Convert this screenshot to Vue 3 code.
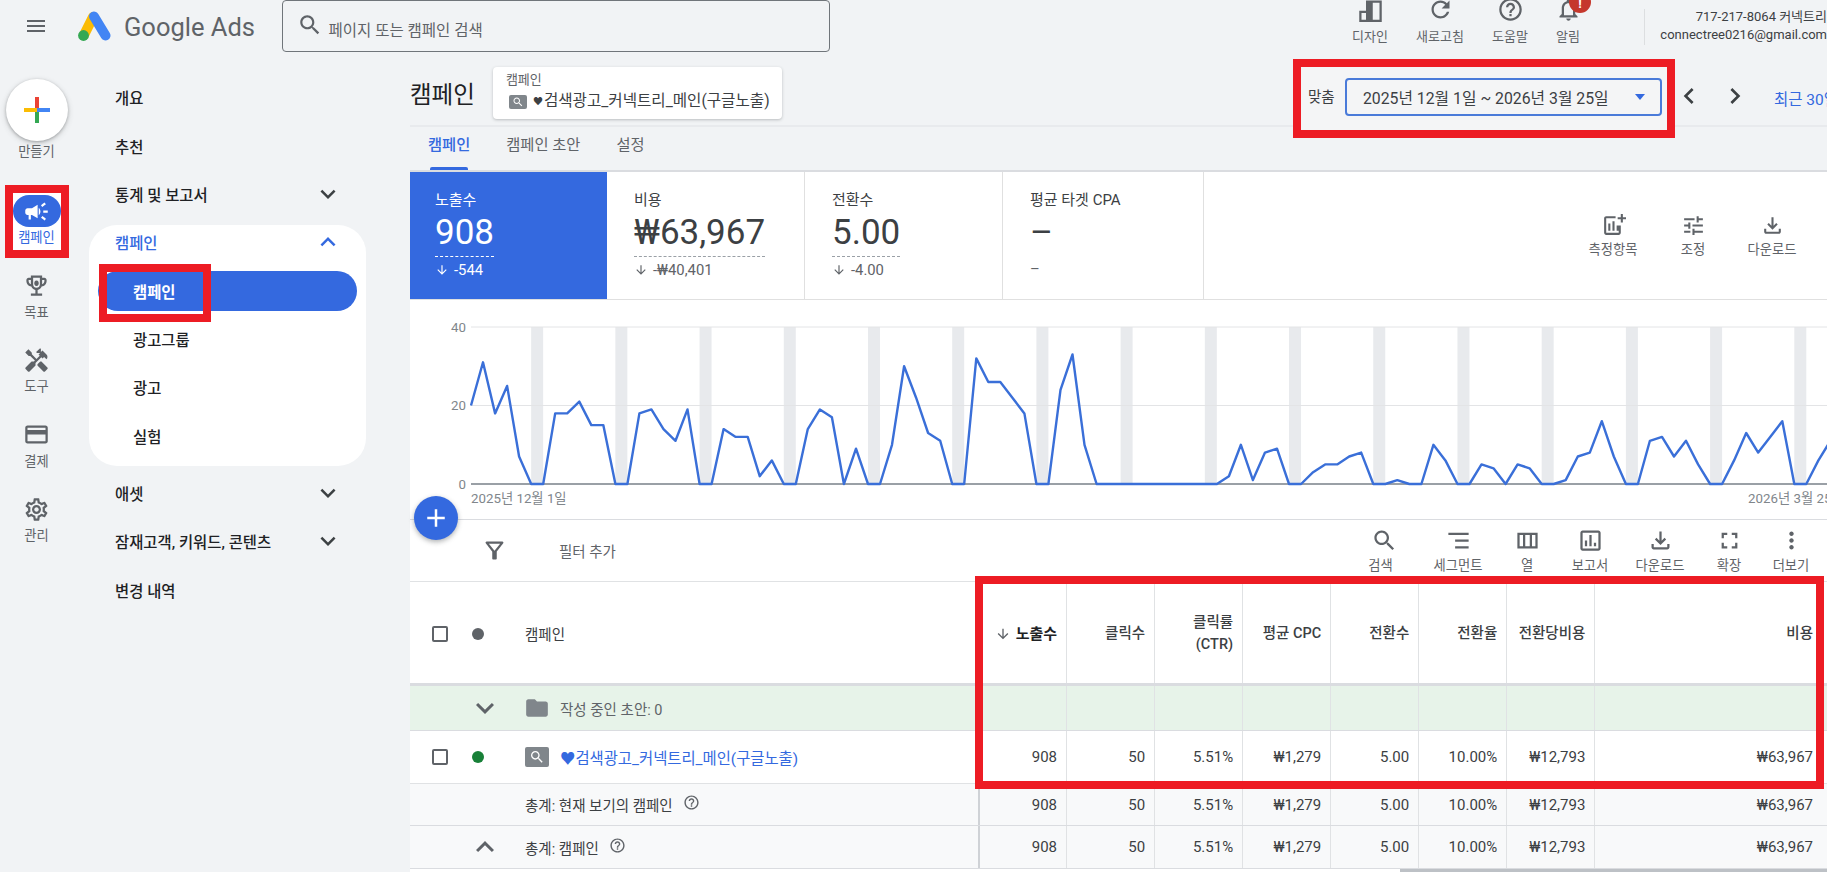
<script setup>
const icons = {
  menu: 'M3 18h18v-2H3v2zm0-5h18v-2H3v2zm0-7v2h18V6H3z',
  search: 'M15.5 14h-.79l-.28-.27C15.41 12.59 16 11.11 16 9.5 16 5.91 13.09 3 9.5 3S3 5.91 3 9.5 5.91 16 9.5 16c1.61 0 3.09-.59 4.23-1.57l.27.28v.79l5 4.99L20.49 19l-4.99-5zm-6 0C7.01 14 5 11.99 5 9.5S7.01 5 9.5 5 14 7.01 14 9.5 11.99 14 9.5 14z',
  more: 'M16.59 8.59L12 13.17 7.41 8.59 6 10l6 6 6-6z',
  less: 'M12 8l-6 6 1.41 1.41L12 10.83l4.59 4.58L18 14z',
  left: 'M15.41 7.41L14 6l-6 6 6 6 1.41-1.41L10.83 12z',
  right: 'M10 6L8.59 7.41 13.17 12l-4.58 4.59L10 18l6-6z',
  refresh: 'M17.65 6.35C16.2 4.9 14.21 4 12 4c-4.42 0-7.99 3.58-7.99 8s3.57 8 7.99 8c3.73 0 6.84-2.55 7.73-6h-2.08c-.82 2.33-3.04 4-5.65 4-3.31 0-6-2.69-6-6s2.69-6 6-6c1.66 0 3.14.69 4.22 1.78L13 11h7V4l-2.35 2.35z',
  help: 'M11 18h2v-2h-2v2zm1-16C6.48 2 2 6.48 2 12s4.48 10 10 10 10-4.48 10-10S17.52 2 12 2zm0 18c-4.41 0-8-3.59-8-8s3.59-8 8-8 8 3.59 8 8-3.59 8-8 8zm0-14c-2.21 0-4 1.79-4 4h2c0-1.1.9-2 2-2s2 .9 2 2c0 2-3 1.75-3 5h2c0-2.25 3-2.5 3-5 0-2.21-1.79-4-4-4z',
  bell: 'M12 22c1.1 0 2-.9 2-2h-4c0 1.1.9 2 2 2zm6-6v-5c0-3.07-1.63-5.64-4.5-6.32V4c0-.83-.67-1.5-1.5-1.5s-1.5.67-1.5 1.5v.68C7.64 5.36 6 7.92 6 11v5l-2 2v1h16v-1l-2-2zm-2 1H8v-6c0-2.48 1.51-4.5 4-4.5s4 2.02 4 4.5v6z',
  design: 'M2 13h6V4h14v19H2V13zm2 2v6h4v-6H4zm10-9v15h6V6h-6z',
  download: 'M18 15v3H6v-3H4v3c0 1.1.9 2 2 2h12c1.1 0 2-.9 2-2v-3h-2zm-1-4l-1.41-1.41L13 12.17V4h-2v8.17L8.41 9.59 7 11l5 5 5-5z',
  tune: 'M3 17v2h6v-2H3zM3 5v2h10V5H3zm10 16v-2h8v-2h-8v-2h-2v6h2zM7 9v2H3v2h4v2h2V9H7zm14 4v-2H11v2h10zm-6-4h2V7h4V5h-4V3h-2v6z',
  metric: 'M14 3H5c-1.1 0-2 .9-2 2v14c0 1.1.9 2 2 2h12c1.1 0 2-.9 2-2v-7h-2v7H5V5h9V3zM7 10h2v7H7zm4-2h2v9h-2zm4 4h2v5h-2zM19 1h2v3h3v2h-3v3h-2V6h-3V4h3z',
  filter: 'M7 6h10l-5.01 6.3L7 6zm-2.75-.39C6.27 8.2 10 13 10 13v6c0 .55.45 1 1 1h2c.55 0 1-.45 1-1v-6s3.73-4.8 5.75-7.39C20.26 4.95 19.79 4 18.96 4H5.04c-.83 0-1.3.95-.79 1.61z',
  segment: 'M3 5h18v2H3zM9 11h12v2H9zM9 17h12v2H9z',
  columns: 'M3 5v14h18V5H3zm11 2v10h-4V7h4zM5 7h3v10H5V7zm14 10h-3V7h3v10z',
  report: 'M19 3H5c-1.1 0-2 .9-2 2v14c0 1.1.9 2 2 2h14c1.1 0 2-.9 2-2V5c0-1.1-.9-2-2-2zm0 16H5V5h14v14zM7 12h2v5H7zm4-5h2v10h-2zm4 7h2v3h-2z',
  expand: 'M7 14H5v5h5v-2H7v-3zm-2-4h2V7h3V5H5v5zm12 7h-3v2h5v-5h-2v3zM14 5v2h3v3h2V5h-5z',
  dots: 'M12 8c1.1 0 2-.9 2-2s-.9-2-2-2-2 .9-2 2 .9 2 2 2zm0 2c-1.1 0-2 .9-2 2s.9 2 2 2 2-.9 2-2-.9-2-2-2zm0 6c-1.1 0-2 .9-2 2s.9 2 2 2 2-.9 2-2-.9-2-2-2z',
  campaign: 'M18 11v2h4v-2h-4zm-2 6.61c.96.71 2.21 1.65 3.2 2.39.4-.53.8-1.07 1.2-1.6-.99-.74-2.24-1.68-3.2-2.4-.4.54-.8 1.08-1.2 1.61zM20.4 5.6c-.4-.53-.8-1.07-1.2-1.6-.99.74-2.24 1.68-3.2 2.4.4.53.8 1.07 1.2 1.6.96-.72 2.21-1.65 3.2-2.4zM4 9c-1.1 0-2 .9-2 2v2c0 1.1.9 2 2 2h1v4h2v-4h1l5 3V6L8 9H4zm11.5 3c0-1.33-.58-2.53-1.5-3.35v6.69c.92-.81 1.5-2.01 1.5-3.34z',
  trophy: 'M19 5h-2V3H7v2H5c-1.1 0-2 .9-2 2v1c0 2.55 1.92 4.63 4.39 4.94.63 1.5 1.98 2.63 3.61 2.96V19H7v2h10v-2h-4v-3.1c1.63-.33 2.98-1.46 3.61-2.96C19.08 12.63 21 10.55 21 8V7c0-1.1-.9-2-2-2zM5 8V7h2v3.82C5.84 10.4 5 9.3 5 8zm7 6c-1.65 0-3-1.35-3-3V5h6v6c0 1.65-1.35 3-3 3zm7-6c0 1.3-.84 2.4-2 2.82V7h2v1zM12 7.5a2 2.5 0 1 0 .01 0z',
  tools: 'M21.67 18.17l-5.3-5.3h-.99l-2.54 2.54v.99l5.3 5.3c.39.39 1.02.39 1.41 0l2.12-2.12c.39-.38.39-1.02 0-1.41zM17.34 10.19l1.41-1.41 2.12 2.12c1.17-1.17 1.17-3.07 0-4.24l-3.54-3.54-1.41 1.41V1.71l-.7-.71-3.54 3.54.71.71h2.83l-1.41 1.41 1.06 1.06-2.89 2.89-4.13-4.13V5.06L4.83 2.04 2 4.87 5.03 7.9h1.41l4.13 4.13-.85.85H7.6l-5.3 5.3c-.39.39-.39 1.02 0 1.41l2.12 2.12c.39.39 1.02.39 1.41 0l5.3-5.3v-2.12l5.15-5.15 1.06 1.05z',
  card: 'M20 4H4c-1.11 0-1.99.89-1.99 2L2 18c0 1.11.89 2 2 2h16c1.11 0 2-.89 2-2V6c0-1.11-.89-2-2-2zm0 14H4v-6h16v6zm0-10H4V6h16v2z',
  gear: 'M19.43 12.98c.04-.32.07-.64.07-.98s-.03-.66-.07-.98l2.11-1.65c.19-.15.24-.42.12-.64l-2-3.46c-.12-.22-.39-.3-.61-.22l-2.49 1c-.52-.4-1.08-.73-1.69-.98l-.38-2.65C14.46 2.18 14.25 2 14 2h-4c-.25 0-.46.18-.49.42l-.38 2.65c-.61.25-1.17.59-1.69.98l-2.49-1c-.23-.09-.49 0-.61.22l-2 3.46c-.13.22-.07.49.12.64l2.11 1.65c-.04.32-.07.65-.07.98s.03.66.07.98l-2.11 1.65c-.19.15-.24.42-.12.64l2 3.46c.12.22.39.3.61.22l2.49-1c.52.4 1.08.73 1.69.98l.38 2.65c.03.24.24.42.49.42h4c.25 0 .46-.18.49-.42l.38-2.65c.61-.25 1.17-.59 1.69-.98l2.49 1c.23.09.49 0 .61-.22l2-3.46c.12-.22.07-.49-.12-.64l-2.11-1.65zm-1.98-1.71c.04.31.05.52.05.73 0 .21-.02.43-.05.73l-.14 1.13.89.7 1.08.84-.7 1.21-1.27-.51-1.04-.42-.9.68c-.43.32-.84.56-1.25.73l-1.06.43-.16 1.13-.2 1.35h-1.4l-.19-1.35-.16-1.13-1.06-.43c-.43-.18-.83-.41-1.23-.71l-.91-.7-1.06.43-1.27.51-.7-1.21 1.08-.84.89-.7-.14-1.13c-.03-.31-.05-.54-.05-.74s.02-.43.05-.73l.14-1.13-.89-.7-1.08-.84.7-1.21 1.27.51 1.04.42.9-.68c.43-.32.84-.56 1.25-.73l1.06-.43.16-1.13.2-1.35h1.39l.19 1.35.16 1.13 1.06.43c.43.18.83.41 1.23.71l.91.7 1.06-.43 1.27-.51.7 1.21-1.07.85-.89.7.14 1.13zM12 8c-2.21 0-4 1.79-4 4s1.79 4 4 4 4-1.79 4-4-1.79-4-4-4zm0 6c-1.1 0-2-.9-2-2s.9-2 2-2 2 .9 2 2-.9 2-2 2z',
  folder: 'M10 4H4c-1.1 0-1.99.9-1.99 2L2 18c0 1.1.9 2 2 2h16c1.1 0 2-.9 2-2V8c0-1.1-.9-2-2-2h-8l-2-2z',
  down: 'M20 12l-1.41-1.41L13 16.17V4h-2v12.17l-5.58-5.59L4 12l8 8 8-8z',
  plus: 'M19 13h-6v6h-2v-6H5v-2h6V5h2v6h6v2z',
};

const topActions = [
  { label: '디자인', icon: 'design', w: 70 },
  { label: '새로고침', icon: 'refresh', w: 70 },
  { label: '도움말', icon: 'help', w: 70 },
  { label: '알림', icon: 'bell', w: 46, badge: true },
];
const railItems = [
  { label: '캠페인', icon: 'campaign', active: true },
  { label: '목표', icon: 'trophy' },
  { label: '도구', icon: 'tools' },
  { label: '결제', icon: 'card' },
  { label: '관리', icon: 'gear' },
];
const scores = [
  { title: '노출수', value: '908', delta: '-544', active: true },
  { title: '비용', value: '₩63,967', delta: '-₩40,401' },
  { title: '전환수', value: '5.00', delta: '-4.00' },
];
const scoreActions = [
  { label: '측정항목', icon: 'metric' },
  { label: '조정', icon: 'tune' },
  { label: '다운로드', icon: 'download' },
];
const tools = [
  { label: '검색', icon: 'search', w: 81 },
  { label: '세그먼트', icon: 'segment', w: 74 },
  { label: '열', icon: 'columns', w: 64 },
  { label: '보고서', icon: 'report', w: 62 },
  { label: '다운로드', icon: 'download', w: 78 },
  { label: '확장', icon: 'expand', w: 60 },
  { label: '더보기', icon: 'dots', w: 64 },
];

const data = [20,31,18,25,7,0,0,18,18,21,15,15,0,0,18,19,14,11,19,0,0,14,12,12,2,6,0,0,14,19,17,0,9,0,0,10,30,22,13,11,0,0,32,26,26,22,18,0,0,24,33,10,0,0,0,0,0,0,0,0,0,0,0,2,10,1,8,9,0,0,3,5,5,7,8,0,0,1,0,0,10,6,0,0,5,4,0,5,4,0,0,1,7,8,16,7,0,0,11,12,7,11,5,0,0,6,13,8,12,16,0,0,6,11,14];
const px = (i) => 61 + 12.03 * i;
const py = (v) => 184 - v * 3.925;
const points = data.map((v, i) => `${px(i).toFixed(1)},${py(v).toFixed(1)}`).join(' ');
const stripes = Array.from({ length: 16 }, (_, k) => px(5 + 7 * k));

const rowValues = ['908', '50', '5.51%', '₩1,279', '5.00', '10.00%', '₩12,793', '₩63,967'];
const heads = ['클릭수', '클릭률\n(CTR)', '평균 CPC', '전환수', '전환율', '전환당비용', '비용'];
</script>

<template>
  <div class="page">
    <header class="topbar">
      <svg class="ic hamburger" viewBox="0 0 24 24"><path :d="icons.menu" /></svg>
      <svg class="logo" viewBox="0 0 33 30">
        <path d="M15 6 L6 24" stroke="#fbbc04" stroke-width="10" stroke-linecap="round" fill="none" />
        <path d="M16 5.5 L27.5 24.5" stroke="#4285f4" stroke-width="10" stroke-linecap="round" fill="none" />
        <circle cx="5.5" cy="24.5" r="5.4" fill="#34a853" />
      </svg>
      <span class="brand">Google Ads</span>
      <div class="searchbox">
        <svg class="ic search-ic" viewBox="0 0 24 24"><path :d="icons.search" /></svg>
        <span>페이지 또는 캠페인 검색</span>
      </div>
      <div class="top-actions">
        <div v-for="a in topActions" :key="a.label" class="top-action" :style="{ width: a.w + 'px' }">
          <svg class="ic" viewBox="0 0 24 24"><path :d="icons[a.icon]" /></svg>
          <span>{{ a.label }}</span>
          <i v-if="a.badge" class="badge">!</i>
        </div>
      </div>
      <div class="vrule"></div>
      <div class="account">
        <div>717-217-8064 커넥트리</div>
        <div>connectree0216@gmail.com</div>
      </div>
    </header>

    <div class="body">
      <aside class="rail">
        <div class="create">
          <div class="create-btn">
            <svg viewBox="0 0 26 26" width="26" height="26">
              <rect x="11" y="0" width="4" height="13" fill="#ea4335" />
              <rect x="11" y="13" width="4" height="13" fill="#34a853" />
              <rect x="0" y="11" width="13" height="4" fill="#fbbc04" />
              <rect x="13" y="11" width="13" height="4" fill="#4285f4" />
            </svg>
          </div>
          <span class="rail-label">만들기</span>
        </div>
        <div class="rail-list">
          <div v-for="r in railItems" :key="r.label" class="rail-item" :class="{ active: r.active }">
            <div class="rail-icon">
              <svg class="ic" viewBox="0 0 24 24"><path :d="icons[r.icon]" /></svg>
            </div>
            <span class="rail-label">{{ r.label }}</span>
          </div>
        </div>
      </aside>

      <nav class="nav">
        <div class="nav-row">개요</div>
        <div class="nav-row">추천</div>
        <div class="nav-row">통계 및 보고서<svg class="ic chev" viewBox="0 0 24 24"><path :d="icons.more" /></svg></div>
        <div class="nav-panel">
          <div class="nav-head">캠페인<svg class="ic chev" viewBox="0 0 24 24"><path :d="icons.less" /></svg></div>
          <div class="nav-pill">캠페인</div>
          <div class="nav-sub">광고그룹</div>
          <div class="nav-sub">광고</div>
          <div class="nav-sub">실험</div>
          <div class="mark mark-nav"></div>
        </div>
        <div class="nav-row after">애셋<svg class="ic chev" viewBox="0 0 24 24"><path :d="icons.more" /></svg></div>
        <div class="nav-row">잠재고객, 키워드, 콘텐츠<svg class="ic chev" viewBox="0 0 24 24"><path :d="icons.more" /></svg></div>
        <div class="nav-row">변경 내역</div>
      </nav>

      <main class="main">
        <div class="headline">
          <h1>캠페인</h1>
          <div class="picker">
            <small>캠페인</small>
            <div class="picker-name">
              <span class="type-ic small"><svg viewBox="0 0 24 24"><path :d="icons.search" /></svg></span>
              <span><span class="heart">♥</span>검색광고_커넥트리_메인(구글노출)</span>
            </div>
          </div>
          <div class="date-wrap">
            <span class="date-kind">맞춤</span>
            <div class="date-box">
              <span>2025년 12월 1일 ~ 2026년 3월 25일</span>
              <i class="caret"></i>
            </div>
          </div>
          <svg class="ic pager first" viewBox="0 0 24 24"><path :d="icons.left" /></svg>
          <svg class="ic pager" viewBox="0 0 24 24"><path :d="icons.right" /></svg>
          <span class="recent">최근 30일</span>
        </div>

        <div class="tabs">
          <span class="tab on">캠페인</span>
          <span class="tab">캠페인 초안</span>
          <span class="tab">설정</span>
        </div>

        <div class="board">
          <div class="scores">
            <div v-for="s in scores" :key="s.title" class="score" :class="{ on: s.active }">
              <div class="score-title">{{ s.title }}</div>
              <div class="score-value dotted">{{ s.value }}</div>
              <div class="score-sub">
                <svg viewBox="0 0 24 24"><path :d="icons.down" /></svg>{{ s.delta }}
              </div>
            </div>
            <div class="score wide">
              <div class="score-title">평균 타겟 CPA</div>
              <div class="score-value">–</div>
              <div class="score-sub blank">–</div>
            </div>
            <div class="score-actions">
              <div v-for="a in scoreActions" :key="a.label" class="tool">
                <svg class="ic" viewBox="0 0 24 24"><path :d="icons[a.icon]" /></svg>
                <span>{{ a.label }}</span>
              </div>
            </div>
          </div>

          <div class="chart">
            <svg class="plot" viewBox="0 0 1417 219" width="1417" height="219">
              <rect v-for="x in stripes" :key="x" :x="x" y="27" width="12" height="157" fill="#e8eaed" />
              <line x1="61" x2="1417" y1="27" y2="27" stroke="#e3e4e6" />
              <line x1="61" x2="1417" y1="105.5" y2="105.5" stroke="#e3e4e6" />
              <line x1="61" x2="1417" y1="184" y2="184" stroke="#9aa0a6" stroke-width="2" />
              <polyline :points="points" fill="none" stroke="#3a6fd8" stroke-width="2.4" stroke-linejoin="round" />
              <text x="56" y="32" text-anchor="end">40</text>
              <text x="56" y="110" text-anchor="end">20</text>
              <text x="56" y="189" text-anchor="end">0</text>
              <text x="61" y="203">2025년 12월 1일</text>
              <text x="1338" y="203">2026년 3월 25일</text>
            </svg>
            <div class="fab"><svg viewBox="0 0 24 24"><path :d="icons.plus" /></svg></div>
          </div>

          <div class="toolbar">
            <svg class="ic filter" viewBox="0 0 24 24"><path :d="icons.filter" /></svg>
            <span class="filter-text">필터 추가</span>
            <div class="tools">
              <div v-for="t in tools" :key="t.label" class="tool" :style="{ width: t.w + 'px' }">
                <svg class="ic" viewBox="0 0 24 24"><path :d="icons[t.icon]" /></svg>
                <span>{{ t.label }}</span>
              </div>
            </div>
          </div>

          <div class="table">
            <div class="row head">
              <div class="first">
                <div class="lead"><i class="check"></i><i class="dot gray"></i></div>
                <span>캠페인</span>
              </div>
              <div class="cell strong"><svg viewBox="0 0 24 24"><path :d="icons.down" /></svg>노출수</div>
              <div v-for="h in heads" :key="h" class="cell pre">{{ h }}</div>
            </div>
            <div class="row draft">
              <div class="first">
                <div class="lead chevron"><svg class="ic" viewBox="0 0 24 24"><path :d="icons.more" /></svg></div>
                <svg class="ic folder" viewBox="0 0 24 24"><path :d="icons.folder" /></svg>
                <span class="draft-text">작성 중인 초안: 0</span>
              </div>
              <div v-for="n in 8" :key="n" class="cell"></div>
            </div>
            <div class="row item">
              <div class="first">
                <div class="lead"><i class="check"></i><i class="dot green"></i></div>
                <span class="type-ic"><svg viewBox="0 0 24 24"><path :d="icons.search" /></svg></span>
                <a class="link">♥검색광고_커넥트리_메인(구글노출)</a>
              </div>
              <div v-for="v in rowValues" :key="v" class="cell">{{ v }}</div>
            </div>
            <div class="row total one">
              <div class="first">
                <div class="lead"></div>
                <span>총계: 현재 보기의 캠페인</span>
                <svg class="ic q" viewBox="0 0 24 24"><path :d="icons.help" /></svg>
              </div>
              <div v-for="v in rowValues" :key="v" class="cell">{{ v }}</div>
            </div>
            <div class="row total two">
              <div class="first">
                <div class="lead chevron"><svg class="ic" viewBox="0 0 24 24"><path :d="icons.less" /></svg></div>
                <span>총계: 캠페인</span>
                <svg class="ic q" viewBox="0 0 24 24"><path :d="icons.help" /></svg>
              </div>
              <div v-for="v in rowValues" :key="v" class="cell">{{ v }}</div>
            </div>
            <div class="scroll"><i></i></div>
            <div class="mark mark-table"></div>
          </div>
        </div>
      </main>
    </div>
  </div>
</template>

<style>
html, body { margin: 0; background: #f1f3f5; }
</style>

<style scoped>
.page {
  width: 1827px;
  height: 872px;
  overflow: hidden;
  background: #f1f3f5;
  color: #3c4043;
  font-family: Roboto, "Noto Sans CJK KR", sans-serif;
  font-size: 15px;
}
.ic { width: 24px; height: 24px; fill: #5f6368; flex: none; display: block; }

/* top bar */
.topbar { height: 60px; display: flex; align-items: flex-start; }
.hamburger { margin: 14px 0 0 24px; }
.logo { width: 33px; height: 30px; margin: 11px 0 0 30px; flex: none; }
.brand { margin: 9px 0 0 13px; font-size: 25.5px; line-height: 36px; color: #5f6368; width: 158px; white-space: nowrap; }
.searchbox {
  box-sizing: border-box;
  width: 550px;
  height: 52px;
  border: 1px solid #70757a;
  border-radius: 4px;
  display: flex;
  align-items: center;
  padding: 0 0 0 14px;
  color: #5f6368;
  font-size: 15.5px;
}
.search-ic { width: 26px; height: 26px; margin-right: 6px; margin-top: -2px; }
.searchbox span { margin-top: 6px; }
.top-actions { display: flex; margin-left: 505px; }
.top-action { position: relative; display: flex; flex-direction: column; align-items: center; font-size: 13px; line-height: 17px; color: #5f6368; gap: 4.5px; }
.top-action .ic { width: 27px; height: 27px; margin-top: -4px; }
.top-action span { white-space: nowrap; }
.badge {
  position: absolute;
  left: 24px;
  top: -9px;
  width: 22px;
  height: 22px;
  border-radius: 50%;
  background: #c5372c;
  color: #fff;
  font: 700 13px/26px Roboto, sans-serif;
  text-align: center;
}
.vrule { width: 1px; height: 36px; margin: 9px 0 0 53px; background: #dcdee0; }
.account { margin: 8px 0 0 6px; width: 176px; flex: none; text-align: right; font-size: 13px; line-height: 18px; white-space: nowrap; color: #3c4043; }

/* layout */
.body { display: flex; height: 812px; }

/* rail */
.rail { width: 73px; flex: none; display: flex; flex-direction: column; align-items: center; }
.create { padding-top: 19px; display: flex; flex-direction: column; align-items: center; }
.create-btn {
  width: 62px; height: 62px; border-radius: 50%;
  background: #fff;
  box-shadow: 0 1px 3px rgba(60,64,67,.35), 0 2px 6px rgba(60,64,67,.2);
  display: flex; align-items: center; justify-content: center;
  margin-bottom: 2px;
}
.rail-label { font-size: 13.3px; line-height: 18px; color: #5f6368; white-space: nowrap; }
.rail-list { margin-top: 32px; }
.rail-item { width: 48px; height: 74.5px; box-sizing: border-box; padding-top: 2px; display: flex; flex-direction: column; align-items: center; }
.rail-icon { width: 48px; height: 32px; border-radius: 16px; display: flex; align-items: center; justify-content: center; margin-bottom: 2px; }
.rail-icon .ic { width: 27px; height: 27px; }
.rail-item.active { height: 57px; margin-bottom: 17.5px; background: #fff; outline: 8px solid #ed1c24; }
.rail-item.active .rail-icon { background: #3469df; }
.rail-item.active .ic { fill: #fff; }
.rail-item.active .rail-label { color: #3469df; }

/* nav */
.nav { width: 337px; flex: none; padding-top: 12.75px; font-size: 15.4px; font-weight: 500; color: #202124; box-sizing: border-box; }
.nav-row { height: 48.5px; display: flex; align-items: center; padding-left: 42px; position: relative; }
.nav-row.after { margin-top: 2px; }
.chev { position: absolute; left: 240px; top: 50%; margin-top: -15px; width: 30px; height: 30px; fill: #3c4043; }
.nav-panel { position: relative; margin: 7px 0 0 16px; width: 277px; height: 241px; background: #fff; border-radius: 28px; }
.nav-head { position: relative; height: 34px; margin-bottom: 2px; padding-left: 26px; display: flex; align-items: center; color: #3469df; }
.nav-head .chev { left: 224px; fill: #3469df; }
.nav-pill { margin: 12px 9px 3px 9px; height: 40px; border-radius: 20px; background: #3469df; color: #fff; display: flex; align-items: center; padding-left: 35px; font-weight: 700; }
.nav-sub { height: 48.5px; padding-left: 44px; display: flex; align-items: center; }
.mark { position: absolute; border: 8px solid #ed1c24; box-sizing: border-box; pointer-events: none; }
.mark-nav { left: 10px; top: 39px; width: 112px; height: 58px; }

/* main */
.main { width: 1417px; flex: none; }
.headline { height: 67px; box-sizing: border-box; padding-top: 7px; border-bottom: 2px solid #e8eaed; display: flex; align-items: flex-start; }
.headline h1 { margin: 8px 18px 0 0; font-size: 23.5px; line-height: 40px; font-weight: 400; color: #202124; width: 66px; white-space: nowrap; }
.picker { box-sizing: border-box; width: 289px; height: 52px; background: #fff; border-radius: 4px; box-shadow: 0 1px 3px rgba(60,64,67,.3); padding: 5px 0 0 13px; flex: none; }
.picker small { display: block; font-size: 13px; line-height: 16px; color: #5f6368; }
.picker-name { display: flex; align-items: center; gap: 6px; font-size: 15.6px; line-height: 22px; color: #3c4043; margin-top: 2px; padding-left: 3px; white-space: nowrap; }
.heart { font-size: 10px; margin-right: 1px; vertical-align: 1px; }
.type-ic { width: 24px; height: 20px; background: #80868b; border-radius: 2px; display: flex; align-items: center; justify-content: center; flex: none; }
.type-ic svg { width: 16px; height: 16px; fill: #fff; }
.type-ic.small { width: 18px; height: 14px; }
.type-ic.small svg { width: 12px; height: 12px; }
.date-wrap {
  position: relative; z-index: 2;
  box-sizing: border-box;
  margin-left: 519px;
  width: 366px; height: 63px;
  padding: 11px 0 0 7px;
  background: #f4f5f6;
  outline: 8px solid #ed1c24;
  display: flex; align-items: flex-start; flex: none;
}
.date-kind { width: 37px; line-height: 40px; font-size: 14.5px; color: #3c4043; }
.date-box { box-sizing: border-box; width: 317px; height: 38px; border: 2px solid #4a7bd9; border-radius: 4px; display: flex; align-items: center; padding: 0 0 0 16px; font-size: 15.8px; color: #3c4043; position: relative; white-space: nowrap; }
.caret { position: absolute; right: 15px; top: 14px; width: 0; height: 0; border: 5px solid transparent; border-top: 6px solid #3469df; border-bottom: 0; }
.pager { width: 32px; height: 32px; margin: 13px 0 0 14px; fill: #3c4043; }
.pager.first { margin-left: 6px; }
.recent { margin: 20px 0 0 23px; color: #3469df; font-size: 15.5px; white-space: nowrap; }

.tabs { height: 45px; box-sizing: border-box; display: flex; gap: 36px; padding: 7px 0 0 18px; font-size: 15.3px; color: #5f6368; border-bottom: 2px solid #dadce0; }
.tab { height: 36px; line-height: 22px; white-space: nowrap; position: relative; }
.tab.on { color: #3469df; font-weight: 500; }
.tab.on::after { content: ""; position: absolute; left: 2px; right: 2px; top: 33px; height: 3px; background: #3469df; border-radius: 2px 2px 0 0; }

.board { background: #fff; height: 700px; }
.scores { height: 128px; display: flex; border-bottom: 1px solid #e0e0e0; box-sizing: border-box; }
.score { width: 198px; box-sizing: border-box; padding: 19px 0 0 27px; border-right: 1px solid #e0e0e0; flex: none; color: #3c4043; }
.score.on { width: 197px; padding-left: 25px; background: #3469df; color: #fff; border: 0; }
.score.wide { width: 201px; padding-left: 27px; }
.score-title { font-size: 15px; line-height: 18px; }
.score-value { font-size: 35px; line-height: 40px; margin-top: 4px; }
.dotted { display: inline-block; border-bottom: 1px dashed #9aa0a6; padding-bottom: 3px; min-width: 59px; }
.on .dotted { border-bottom-color: #fff; }
.score-sub { font-size: 14.8px; line-height: 18px; display: flex; align-items: center; gap: 5px; color: #5f6368; margin-top: 4px; }
.on .score-sub { color: #fff; }
.score-sub.blank { margin-top: 7px; }
.score-sub svg { width: 14px; height: 14px; fill: currentColor; }
.score-actions { margin-left: auto; display: grid; grid-template-columns: 80px 80px 78px; margin-right: 16px; align-items: center; }
.tool { display: flex; flex-direction: column; align-items: center; font-size: 13.3px; line-height: 18px; color: #5f6368; white-space: nowrap; gap: 3px; }
.score-actions .ic { width: 25px; height: 25px; }

.chart { position: relative; height: 220px; border-bottom: 1px solid #dadce0; box-sizing: border-box; }
.plot { display: block; }
.plot text { font-size: 13.3px; fill: #80868b; font-family: Roboto, "Noto Sans CJK KR", sans-serif; }
.fab { position: absolute; left: 4px; bottom: -21px; width: 44px; height: 44px; border-radius: 50%; background: #3469df; box-shadow: 0 2px 5px rgba(60,64,67,.4); display: flex; align-items: center; justify-content: center; z-index: 1; }
.fab svg { width: 30px; height: 30px; fill: #fff; }

.toolbar { height: 61px; display: flex; align-items: center; }
.filter { width: 27px; height: 27px; margin-left: 71px; }
.filter-text { margin-left: 51px; font-size: 14.5px; color: #5f6368; white-space: nowrap; }
.tools { margin-left: auto; margin-right: 4px; display: flex; padding-top: 1px; }
.tools .ic { width: 27px; height: 27px; }
.tools .tool { gap: 3px; }
.tools .tool:first-child .ic { margin-left: 7px; }

.table { position: relative; border-top: 1px solid #e0e2e4; }
.row { display: grid; grid-template-columns: 568px repeat(7, 88.05px) 1fr; box-sizing: border-box; }
.first { display: flex; align-items: center; }
.lead { width: 115px; height: 100%; flex: none; box-sizing: border-box; padding-left: 22px; display: flex; align-items: center; gap: 24px; }
.lead.chevron { padding-left: 57px; }
.lead.chevron .ic { width: 36px; height: 36px; }
.check { width: 16px; height: 16px; box-sizing: border-box; border: 2px solid #5f6368; border-radius: 2px; flex: none; }
.dot { width: 12px; height: 12px; border-radius: 50%; flex: none; }
.dot.gray { background: #5f6368; }
.dot.green { background: #188038; }
.cell { display: flex; align-items: center; justify-content: flex-end; text-align: right; padding-right: 9px; border-left: 1px solid #e0e2e4; color: #3c4043; font-size: 15px; line-height: 22px; white-space: nowrap; box-sizing: border-box; }
.cell:last-child { padding-right: 14px; }
.pre { white-space: pre-line; }
.head { height: 104px; border-bottom: 3px solid #dadce0; font-size: 14px; }
.head .first { color: #3c4043; font-size: 14.5px; padding-top: 2px; }
.head .cell { font-weight: 500; font-size: 14.5px; padding-top: 2px; }
.strong { color: #202124 !important; font-weight: 700 !important; font-size: 15px !important; gap: 5px; }
.strong svg { width: 16px; height: 16px; fill: #5f6368; }
.draft { height: 45px; background: #e7f3e9; border-bottom: 1px solid #dadce0; }
.folder { margin: 0 10px 0 -1px; width: 26px; height: 26px; fill: #80868b; }
.draft-text { color: #5f6368; font-size: 14.5px; }
.item { height: 53px; border-bottom: 1px solid #e0e2e4; }
.item .type-ic { margin-right: 11px; }
.link { color: #3469df; font-size: 15.4px; white-space: nowrap; }
.total { background: #f8f9fa; border-bottom: 1px solid #dadce0; }
.total.one { height: 42px; }
.total.two { height: 43px; }
.total .first span { color: #3c4043; font-size: 14.5px; }
.total .cell:nth-child(2) { border-left: 2px solid #cfd2d6; }
.q { width: 17px; height: 17px; margin: -4px 0 0 10px; }
.scroll { height: 3px; }
.scroll i { display: block; margin-left: 990px; height: 3px; background: #bdc1c6; }
.mark-table { left: 565px; top: -6px; width: 849px; height: 213px; }
</style>
